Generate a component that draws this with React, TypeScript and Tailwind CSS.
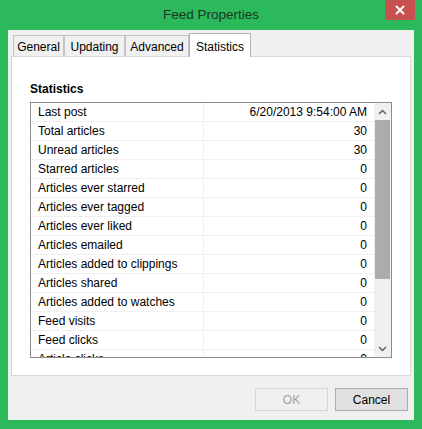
import React from "react";

const rows: [string, string][] = [
  ["Last post", "6/20/2013 9:54:00 AM"],
  ["Total articles", "30"],
  ["Unread articles", "30"],
  ["Starred articles", "0"],
  ["Articles ever starred", "0"],
  ["Articles ever tagged", "0"],
  ["Articles ever liked", "0"],
  ["Articles emailed", "0"],
  ["Articles added to clippings", "0"],
  ["Articles shared", "0"],
  ["Articles added to watches", "0"],
  ["Feed visits", "0"],
  ["Feed clicks", "0"],
  ["Article clicks", "0"],
];

const tabs = [
  { label: "General", w: "w-[51px]" },
  { label: "Updating", w: "w-[61px]" },
  { label: "Advanced", w: "w-[64px]" },
];

function Chevron({ up }: { up?: boolean }) {
  return (
    <svg width="9" height="6" viewBox="0 0 9 6">
      <path
        d={up ? "M1 5 L4.5 1.5 L8 5" : "M1 1 L4.5 4.5 L8 1"}
        fill="none"
        stroke="#606060"
        strokeWidth="1.5"
      />
    </svg>
  );
}

export default function App() {
  return (
    <div
      className="w-[422px] h-[429px] bg-[#2bb95b] flex flex-col text-[12px] text-black"
      style={{ fontFamily: '"Liberation Sans", Arial, sans-serif' }}
    >
      {/* Title bar */}
      <div className="h-[30px] flex">
        <div className="w-[37px]" />
        <div className="flex-1 flex items-center justify-center text-[13.5px] text-[#1f3527]">
          Feed Properties
        </div>
        <div className="w-[37px] flex">
          <button className="w-[30px] h-[20px] bg-[#c75050] flex items-center justify-center">
            <svg width="10" height="10" viewBox="0 0 10 10">
              <path d="M1 1 L9 9 M9 1 L1 9" stroke="white" strokeWidth="2" />
            </svg>
          </button>
        </div>
      </div>

      {/* Client area */}
      <div className="mx-[8px] h-[390px] bg-[#f0f0f0] flex flex-col px-[3px] pt-[3px]">
        {/* Tabs */}
        <div className="flex items-end h-[23px] pl-[2px] relative z-10">
          {tabs.map((t) => (
            <div
              key={t.label}
              className={`${t.w} h-[21px] border border-b-0 border-[#c4c4c4] bg-[#f0f0f0] flex items-center justify-center pt-[1px]`}
            >
              {t.label}
            </div>
          ))}
          <div className="w-[62px] h-[24px] -mb-px border border-b-0 border-[#b4b4b4] bg-white flex items-start justify-center pt-[4px]">
            Statistics
          </div>
        </div>

        {/* Panel */}
        <div className="h-[320px] border border-[#d9d9d9] bg-white px-[18px]">
          <div className="mt-[24px] h-[16px] leading-[16px] font-bold mb-[5px]">Statistics</div>
          <div className="h-[256px] border border-[#8c8c8c] flex overflow-hidden">
            <div className="flex-1 overflow-hidden">
              {rows.map(([k, v]) => (
                <div key={k} className="h-[19px] flex border-b border-[#f0f0f0]">
                  <div className="w-[173px] border-r border-[#f0f0f0] pl-[7px] leading-[19px] whitespace-nowrap">
                    {k}
                  </div>
                  <div className="flex-1 pr-[7px] text-right leading-[19px] whitespace-nowrap">{v}</div>
                </div>
              ))}
            </div>
            <div className="w-[17px] bg-[#f0f0f0] flex flex-col">
              <div className="h-[17px] flex items-center justify-center">
                <Chevron up />
              </div>
              <div className="h-[159px] mx-[1px] bg-[#acacac]" />
              <div className="flex-1" />
              <div className="h-[17px] flex items-center justify-center">
                <Chevron />
              </div>
            </div>
          </div>
        </div>

        {/* Buttons */}
        <div className="flex justify-end gap-[7px] mt-[12px] pr-[3px]">
          <button className="w-[73px] h-[23px] border border-[#d5d5d5] bg-[#f0f0f0] text-[#a0a0a0]">
            OK
          </button>
          <button className="w-[73px] h-[23px] border border-[#adadad] bg-[#e1e1e1]">Cancel</button>
        </div>
      </div>
    </div>
  );
}
